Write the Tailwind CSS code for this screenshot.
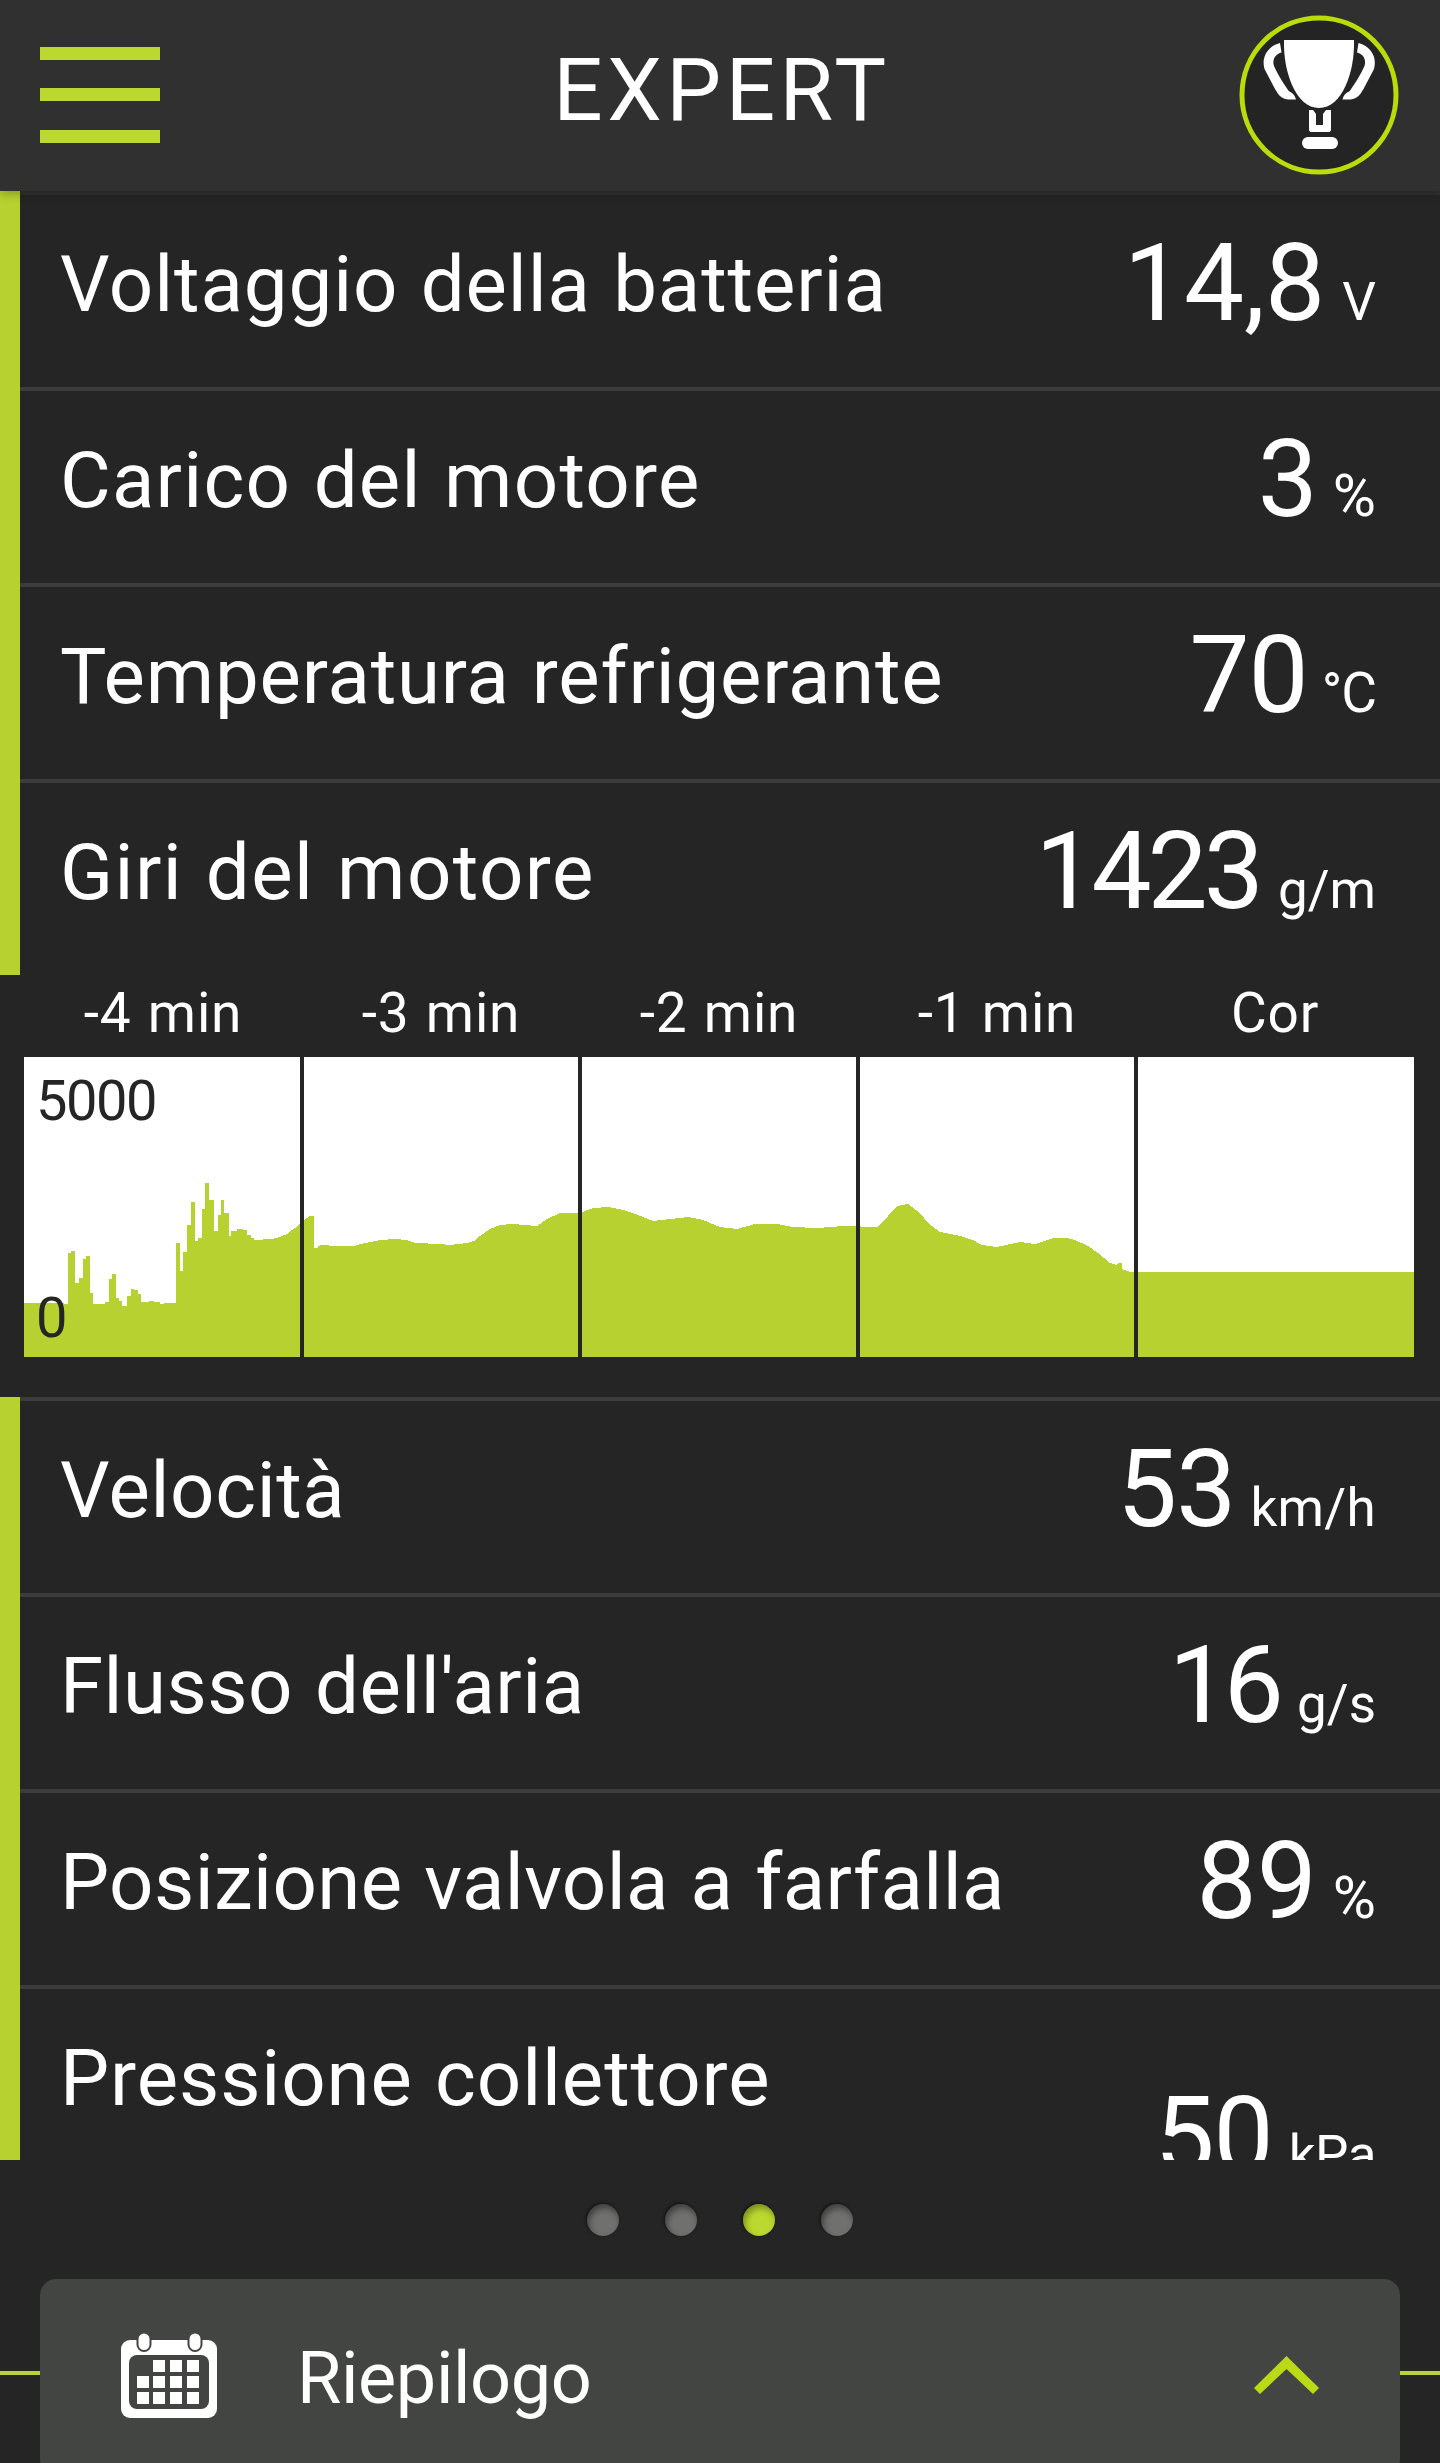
<!DOCTYPE html>
<html lang="it">
  <head>
    <meta charset="UTF-8" />
    <meta name="viewport" content="width=device-width, initial-scale=1.0" />
    <title>Expert</title>
    <script src="https://cdn.jsdelivr.net/npm/@tailwindcss/browser@4"></script>
  </head>

  <body class="bg-[#252525] text-white font-[Roboto,sans-serif] h-[2463px] flex flex-col overflow-hidden">
    <header class="relative z-10 h-[191px] shrink-0 bg-[#303030] shadow-[0_2px_10px_rgba(0,0,0,0.3)] flex items-center justify-between pl-10 pr-10 pb-px">
      <button class="w-[162px] flex flex-col gap-7" aria-label="Menu">
        <span class="block w-[120px] h-[13px] bg-[#bad82f]"></span>
        <span class="block w-[120px] h-[13px] bg-[#bad82f]"></span>
        <span class="block w-[120px] h-[13px] bg-[#bad82f] mt-px"></span>
      </button>
      <h1 class="text-[87px] leading-[180px] pb-2.5 tracking-[4.500px] pl-1">EXPERT</h1>
      <button class="w-[162px] h-[162px]" aria-label="Trofei">
        <svg class="block w-[162px] h-[162px]" viewBox="158 14 162 162" fill="#fff">
          <circle cx="239" cy="95" r="77" fill="#242424" stroke="#bbdc0b" stroke-width="5" />
          <path d="M204 40H274C275 72 262 108 239 108C216 108 203 72 204 40Z" />
          <path id="handle" d="M200 43L201.500 52.500C195 54 192 60 194 66C198 75 204 84 208 90C210 93 214 92 216 99.500H208C201 99 198 94 195 89L184.500 69C181 57 188 46 200 43Z" />
          <use href="#handle" transform="translate(478.500 0) scale(-1 1)" />
          <path d="M229 110H233L236 114V125H243V114L246 110H251V130.500L249.500 132H230.500L229 130.500Z" />
          <rect x="222" y="137" width="36" height="12" rx="6" />
        </svg>
      </button>
    </header>

    <main class="shrink-0 text-[78px] [word-spacing:2px]">
      <section class="border-l-[20px] border-[#b7d130]">
        <div class="h-[196px] border-t-4 border-[#303030] pl-10 pr-16 flex justify-between">
          <span class="leading-[180px] tracking-[0.9px]">Voltaggio della batteria</span>
          <span class="flex items-baseline gap-[17px] text-[107px] leading-[177px]">14,8<small class="text-[53px] leading-none">V</small></span>
        </div>
        <div class="h-[196px] border-t-4 border-[#3c3c3c] pl-10 pr-16 flex justify-between">
          <span class="leading-[180px] tracking-[1.2px]">Carico del motore</span>
          <span class="flex items-baseline gap-[15px] text-[107px] leading-[177px]">3<small class="text-[59px] leading-none">%</small></span>
        </div>
        <div class="h-[196px] border-t-4 border-[#3c3c3c] pl-10 pr-16 flex justify-between">
          <span class="leading-[180px] tracking-[0.8px]">Temperatura refrigerante</span>
          <span class="flex items-baseline gap-[14px] text-[107px] leading-[177px] tracking-[-1px]">70<small class="text-[55px] leading-none tracking-[-1px]">°C</small></span>
        </div>
        <div class="h-[196px] border-t-4 border-[#3c3c3c] pl-10 pr-16 flex justify-between">
          <span class="leading-[180px] tracking-[1.4px]">Giri del motore</span>
          <span class="flex items-baseline gap-[18px] text-[107px] leading-[177px] tracking-[-4px]">1423<small class="text-[53px] leading-none tracking-normal">g/m</small></span>
        </div>
      </section>

      <section class="h-[422px] px-6">
        <div class="h-[82px] grid grid-cols-[repeat(5,278px)] text-center text-[55px] leading-[76px] tracking-[0.8px]">
          <span>-4 min</span>
          <span>-3 min</span>
          <span>-2 min</span>
          <span>-1 min</span>
          <span>Cor</span>
        </div>
        <div class="relative w-[1390px] h-[300px] bg-white">
          <svg class="block w-[1390px] h-[300px]" viewBox="0 0 1390 300" shape-rendering="crispEdges">
            <path fill="#b7d130" d="M0 300V246H40V247H44V196H47V194H51V226H55V221H59V202H62V199H66V236H69V247H81V245H85V222H88V217H92V241H95V244H98V249H103V239H107V232H110V233H114V237H117V245H125V244H130V245H136V247H140V246H152V186H156V214H159V195H163V168H167V145H171V184H174V181H178V152H181V126H185V143H190V174H194V158H197V143H200V156H205V179H207V174H213V172H219V173H223V178H227V181H230V183L248 182L256 180L263 177L268 173L271 171L276 166L280 163L286 159H290V191H294V189L298 188L311 189H330L336 187L346 185L356 183L371 182L383 183L391 186L416 187L426 188L443 186L450 184L456 179L466 172L476 168L489 167L513 169L523 162L536 156H556L569 151L584 150L599 153L614 158L629 164L646 162L664 160L679 163L696 170L713 172L731 167H753L768 170L793 171L819 169L854 170L864 159L873 149L884 147L896 156L904 166L916 175L936 179L949 183L958 188L973 190L996 185L1011 187L1029 181H1043L1051 183L1064 189L1074 196L1086 206L1093 208L1094 206H1098V212L1103 214L1106 215H1390V300Z" />
            <path stroke="#252525" stroke-width="4" d="M278 0V300M556 0V300M834 0V300M1112 0V300" />
          </svg>
          <div class="absolute inset-0 px-3 pt-[11px] pb-1.5 flex flex-col justify-between text-[#252525] text-[56px] leading-[66px] tracking-[-1.5px]">
            <span>5000</span>
            <span>0</span>
          </div>
        </div>
      </section>

      <section class="h-[763px] overflow-hidden border-l-[20px] border-[#b7d130]">
        <div class="h-[196px] border-t-4 border-[#3c3c3c] pl-10 pr-16 flex justify-between">
          <span class="leading-[180px] tracking-[0.6px]">Velocità</span>
          <span class="flex items-baseline gap-[15px] text-[107px] leading-[177px] tracking-[-1px]">53<small class="text-[53px] leading-none tracking-[0.3px]">km/h</small></span>
        </div>
        <div class="h-[196px] border-t-4 border-[#3c3c3c] pl-10 pr-16 flex justify-between">
          <span class="leading-[180px] tracking-[0.5px]">Flusso dell'aria</span>
          <span class="flex items-baseline gap-[18px] text-[107px] leading-[177px] tracking-[-5px]">16<small class="text-[53px] leading-none tracking-normal">g/s</small></span>
        </div>
        <div class="h-[196px] border-t-4 border-[#3c3c3c] pl-10 pr-16 flex justify-between">
          <span class="leading-[180px] tracking-[0.4px]">Posizione valvola a farfalla</span>
          <span class="flex items-baseline gap-[16px] text-[107px] leading-[177px]">89<small class="text-[59px] leading-none">%</small></span>
        </div>
        <div class="h-[255px] border-t-4 border-[#3c3c3c] pl-10 pr-16 flex justify-between">
          <span class="leading-[180px] tracking-[0.9px]">Pressione collettore</span>
          <span class="pt-[59px] flex items-baseline gap-[16px] text-[107px] leading-[177px] tracking-[-1px]">50<small class="text-[53px] leading-none tracking-[-0.5px]">kPa</small></span>
        </div>
      </section>
    </main>

    <nav class="h-[119px] shrink-0 flex items-center justify-center gap-[46px]">
      <span class="size-8 rounded-full bg-[#70716f] shadow-[inset_2px_4px_6px_rgba(0,0,0,0.45),-1px_-1px_3px_#111]"></span>
      <span class="size-8 rounded-full bg-[#70716f] shadow-[inset_2px_4px_6px_rgba(0,0,0,0.45),-1px_-1px_3px_#111]"></span>
      <span class="size-8 rounded-full bg-[#bad82f] shadow-[inset_2px_4px_6px_rgba(0,0,0,0.35),-1px_-1px_3px_#111]"></span>
      <span class="size-8 rounded-full bg-[#70716f] shadow-[inset_2px_4px_6px_rgba(0,0,0,0.45),-1px_-1px_3px_#111]"></span>
    </nav>

    <footer class="h-[196px] shrink-0 flex">
      <div class="w-10 h-24 border-b-4 border-[#b9d03f]"></div>
      <div class="w-[1360px] rounded-2xl bg-[#434542] flex items-start pl-[81px] pr-[81px]">
        <svg class="w-[96px] h-[86px] mt-[54px]" viewBox="0 0 96 86" fill="#fff">
          <rect y="7" width="96" height="78" rx="9" />
          <rect x="8" y="22" width="80" height="54" rx="8" fill="#434542" />
          <rect x="16.500" y="-0.500" width="13" height="18.500" rx="6.500" stroke="#434542" stroke-width="2" />
          <rect x="67.500" y="-0.500" width="13" height="18.500" rx="6.500" stroke="#434542" stroke-width="2" />
          <path d="M32 27h12v12H32zM49 27h12v12H49zM66 27h12v12H66zM16 43h12v12H16zM32 43h12v12H32zM49 43h12v12H49zM66 43h12v12H66zM16 59h12v12H16zM32 59h12v12H32zM49 59h12v12H49zM66 59h12v12H66z" />
        </svg>
        <span class="ml-20 flex-1 text-[72px] leading-[199px] tracking-[-0.4px]">Riepilogo</span>
        <svg class="w-[65px] h-[38px] mt-[77px]" viewBox="0 0 65 38" fill="#bbd916">
          <path d="M32.500 0L65 32L59 38L32.500 13L6 38L0 32Z" />
        </svg>
      </div>
      <div class="w-10 h-24 border-b-4 border-[#b9d03f]"></div>
    </footer>
  </body>
</html>
